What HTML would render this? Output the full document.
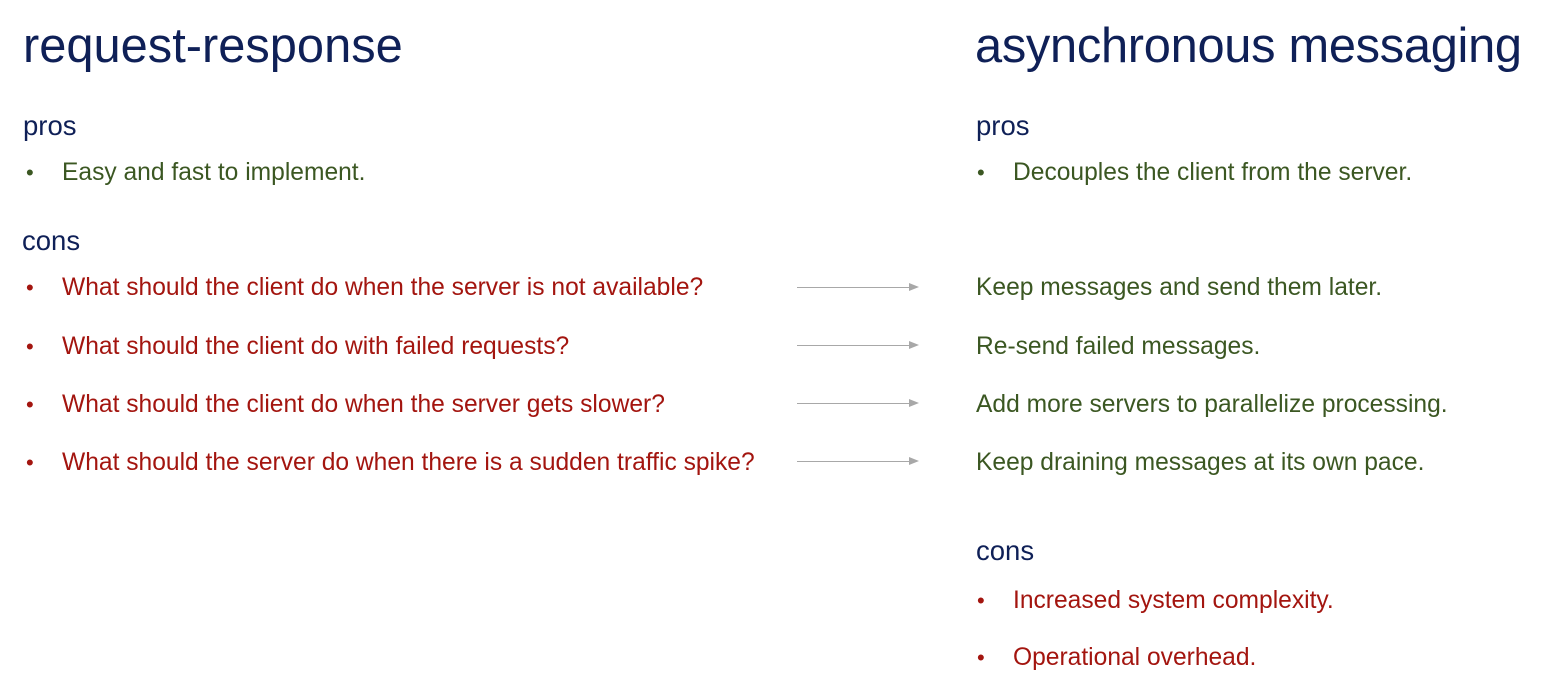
<!DOCTYPE html>
<html><head><meta charset="utf-8"><style>
body{margin:0;width:1548px;height:697px;background:#fff;position:relative;overflow:hidden;font-family:"Liberation Sans",sans-serif}
.t{position:absolute;line-height:30px;font-size:24.6px;white-space:nowrap}
.h{color:#0f2057;font-size:48.8px;line-height:60px}
.s{color:#0f2057;font-size:27.5px}
.g{color:#3b5722}
.r{color:#a3150f}
.b{position:absolute;font-size:22px;line-height:30px}
.a{position:absolute;left:797px;width:112px;height:1px;background:#a8a8a8}
.a:after{content:"";position:absolute;right:-10px;top:-4px;border-left:10px solid #a8a8a8;border-top:4.5px solid transparent;border-bottom:4.5px solid transparent}
</style></head><body>
<div class="t h" style="left:23px;top:16px">request-response</div>
<div class="t h" style="left:975px;top:16px;letter-spacing:-0.3px">asynchronous messaging</div>

<div class="t s" style="left:23px;top:111px">pros</div>
<div class="b g" style="left:26px;top:158px">•</div><div class="t g" style="left:62px;top:158px">Easy and fast to implement.</div>
<div class="t s" style="left:22px;top:226px">cons</div>
<div class="b r" style="left:26px;top:273px">•</div><div class="t r" style="left:62px;top:273px">What should the client do when the server is not available?</div>
<div class="b r" style="left:26px;top:332px">•</div><div class="t r" style="left:62px;top:332px">What should the client do with failed requests?</div>
<div class="b r" style="left:26px;top:390px">•</div><div class="t r" style="left:62px;top:390px">What should the client do when the server gets slower?</div>
<div class="b r" style="left:26px;top:448px">•</div><div class="t r" style="left:62px;top:448px">What should the server do when there is a sudden traffic spike?</div>

<div class="a" style="top:287px"></div>
<div class="a" style="top:345px"></div>
<div class="a" style="top:403px"></div>
<div class="a" style="top:461px"></div>

<div class="t s" style="left:976px;top:111px">pros</div>
<div class="b g" style="left:977px;top:158px">•</div><div class="t g" style="left:1013px;top:158px">Decouples the client from the server.</div>
<div class="t g" style="left:976px;top:273px">Keep messages and send them later.</div>
<div class="t g" style="left:976px;top:332px">Re-send failed messages.</div>
<div class="t g" style="left:976px;top:390px">Add more servers to parallelize processing.</div>
<div class="t g" style="left:976px;top:448px">Keep draining messages at its own pace.</div>
<div class="t s" style="left:976px;top:536px">cons</div>
<div class="b r" style="left:977px;top:586px">•</div><div class="t r" style="left:1013px;top:586px">Increased system complexity.</div>
<div class="b r" style="left:977px;top:643px">•</div><div class="t r" style="left:1013px;top:643px">Operational overhead.</div>
</body></html>
